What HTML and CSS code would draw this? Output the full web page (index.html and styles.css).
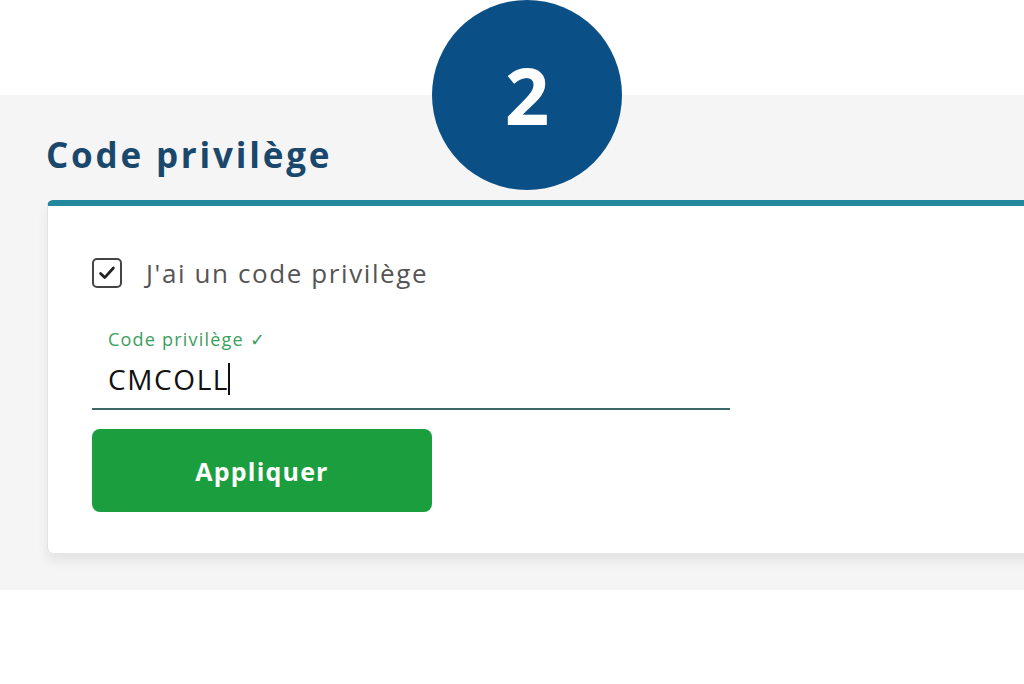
FILE: index.html
```html
<!DOCTYPE html>
<html lang="fr">
<head>
    <meta charset="UTF-8">
    <meta name="viewport" content="width=device-width, initial-scale=1.0">
    <title>Code privilège</title>
    <link rel="stylesheet" href="styles.css">
</head>
<body>
    <div class="top-band">
        <div class="step-badge">2</div>
    </div>
    <section class="promo">
        <h2>Code privilège</h2>
        <div class="card">
            <label class="check-row">
                <span class="checkbox">
                    <svg viewBox="0 0 24 24" width="22" height="22">
                        <path d="M5 12.5l4.5 4.5L19 6.5" fill="none" stroke="#222" stroke-width="3" stroke-linecap="round" stroke-linejoin="round"/>
                    </svg>
                </span>
                J'ai un code privilège
            </label>
            <div class="field">
                <div class="field-label">Code privilège ✓</div>
                <div class="field-input">CMCOLL<span class="caret"></span></div>
            </div>
            <button class="apply">Appliquer</button>
        </div>
    </section>
</body>
</html>
```

FILE: styles.css
```css
* {
    margin: 0;
    padding: 0;
    box-sizing: border-box;
}
body {
    font-family: "Open Sans", Arial, sans-serif;
    background-color: white;
    overflow: hidden;
}
.top-band {
    height: 95px;
    position: relative;
}
.step-badge {
    position: absolute;
    left: 432px;
    top: 0;
    width: 190px;
    height: 190px;
    border-radius: 50%;
    background-color: #0b4f87;
    color: white;
    font-size: 78px;
    font-weight: 700;
    display: flex;
    align-items: center;
    justify-content: center;
    z-index: 2;
}
.promo {
    background-color: #f5f5f5;
    padding: 36px 0 36px 47px;
    height: 495px;
}
h2 {
    font-size: 35px;
    font-weight: 700;
    color: #1a486c;
    letter-spacing: 2.8px;
    line-height: 48px;
    margin-left: -1px;
    margin-bottom: 21px;
}
.card {
    background-color: white;
    border-top: 6px solid #24889c;
    border-left: 1px solid #e2e2e2;
    border-radius: 6px 0 0 6px;
    box-shadow: 0 8px 12px rgba(0, 0, 0, 0.07);
    padding: 52px 0 42px 44px;
    width: 1000px;
    height: 353px;
}
.check-row {
    display: flex;
    align-items: center;
    gap: 24px;
    font-size: 26px;
    letter-spacing: 1.6px;
    color: #555;
    height: 30px;
}
.checkbox {
    width: 30px;
    height: 30px;
    border: 2px solid #444;
    border-radius: 5px;
    display: flex;
    align-items: center;
    justify-content: center;
}
.field {
    width: 638px;
    margin-top: 40px;
    border-bottom: 2px solid #3c6868;
    padding: 0 0 12px 16px;
}
.field-label {
    font-size: 18px;
    letter-spacing: 1.2px;
    color: #3aa05a;
    line-height: 22px;
}
.field-input {
    font-size: 28px;
    letter-spacing: 1.6px;
    color: #111;
    line-height: 34px;
    margin-top: 12px;
    display: flex;
    align-items: center;
}
.caret {
    display: inline-block;
    width: 2px;
    height: 32px;
    background-color: #111;
    margin-left: -1px;
}
.apply {
    margin-top: 19px;
    width: 340px;
    height: 83px;
    border: none;
    border-radius: 8px;
    background-color: #1b9e3d;
    color: white;
    font-family: "Open Sans", Arial, sans-serif;
    font-size: 25px;
    letter-spacing: 1.2px;
    font-weight: 700;
}
```
